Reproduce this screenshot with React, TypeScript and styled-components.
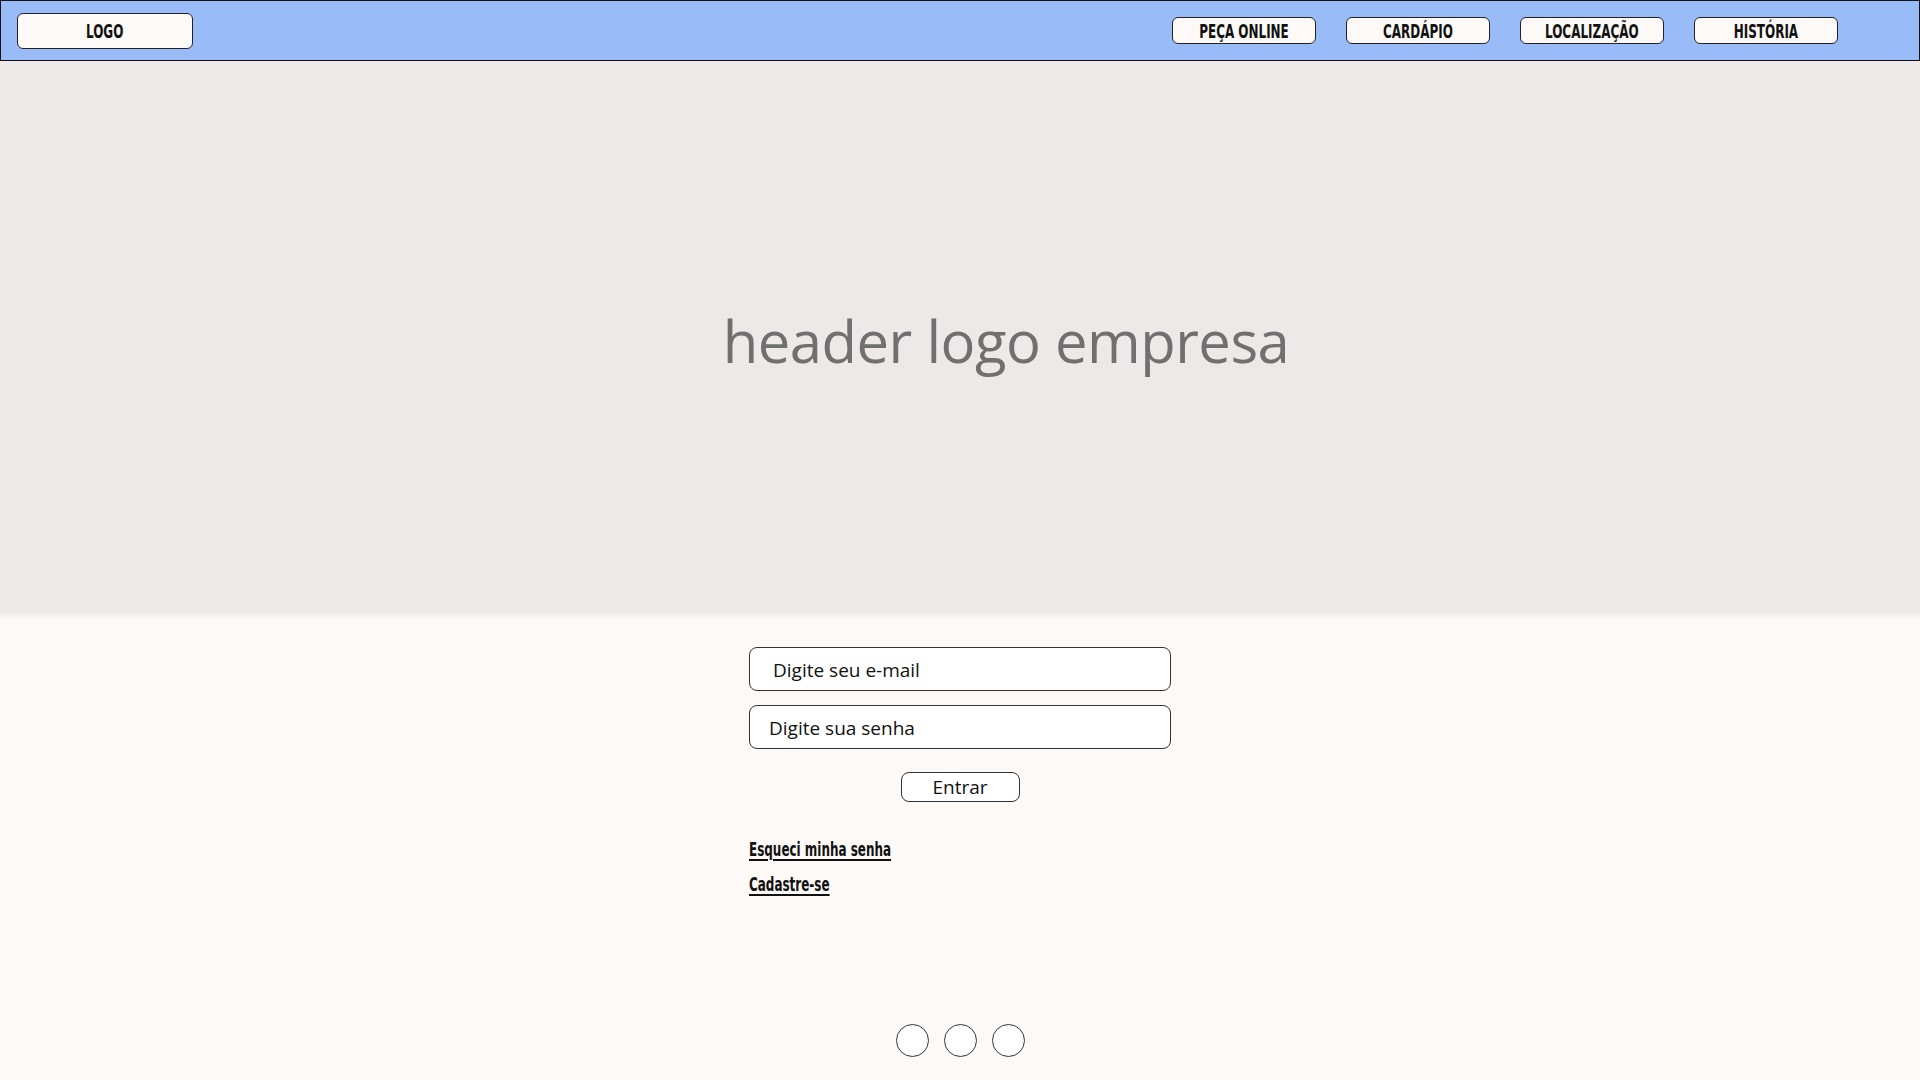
import React from "react";
import styled, { createGlobalStyle } from "styled-components";

const Global = createGlobalStyle`
  html, body { margin: 0; padding: 0; background: #fcf9f7; }
  * { box-sizing: border-box; }
`;

const Page = styled.div`
  min-height: 100vh;
  display: flex;
  flex-direction: column;
  background: #fcf9f7;
`;

const NavBar = styled.nav`
  height: 61px;
  background: #99bcf8;
  border: 1px solid #111;
  display: flex;
  align-items: center;
  padding: 0 81px 0 16px;
`;

const NavLinks = styled.div`
  margin-left: auto;
  display: flex;
  gap: 30px;
`;

const Condensed = styled.span<{ $size: number; $scale: number; $underline?: boolean }>`
  display: inline-block;
  font-family: "DejaVu Sans Condensed", "DejaVu Sans", sans-serif;
  font-weight: bold;
  font-size: ${(p) => p.$size}px;
  transform: scaleX(${(p) => p.$scale});
  transform-origin: left center;
  white-space: nowrap;
  color: #111;
  text-decoration: ${(p) => (p.$underline ? "underline" : "none")};
  text-decoration-thickness: 1.5px;
  text-underline-offset: 3px;
`;

const CenterText = styled(Condensed)`
  transform-origin: center center;
`;

const NavButton = styled.button<{ $w: number; $h: number; $r: number }>`
  width: ${(p) => p.$w}px;
  height: ${(p) => p.$h}px;
  border-radius: ${(p) => p.$r}px;
  background: #fcf9f7;
  border: 1px solid #222;
  display: flex;
  align-items: center;
  justify-content: center;
  padding: 0;
  cursor: pointer;
  overflow: visible;
`;

const Hero = styled.header`
  height: 552px;
  background: #ede9e8;
  box-shadow: 0 2px 5px rgba(0, 0, 0, 0.08);
  display: flex;
  justify-content: center;
  padding: 251px 0 0 92px;
  position: relative;
  z-index: 1;
`;

const HeroTitle = styled.h1`
  margin: 0;
  font-family: "Open Sans", "Noto Sans", sans-serif;
  font-weight: 400;
  font-size: 58px;
  line-height: 1;
  color: #707070;
  letter-spacing: -0.5px;
`;

const Form = styled.form`
  width: 422px;
  margin: 34px auto 0;
  display: flex;
  flex-direction: column;
`;

const Field = styled.div<{ $pad: number; $mt: number }>`
  height: 44px;
  margin-top: ${(p) => p.$mt}px;
  border: 1px solid #333;
  border-radius: 8px;
  background: #fff;
  display: flex;
  align-items: center;
  padding: 2px 0 0 ${(p) => p.$pad}px;
  font-family: "Open Sans", "Noto Sans", sans-serif;
  font-size: 19px;
  color: #111;
`;

const Submit = styled.button`
  align-self: center;
  width: 119px;
  height: 30px;
  margin-top: 23px;
  border: 1px solid #333;
  border-radius: 8px;
  background: #fff;
  font-family: "Open Sans", "Noto Sans", sans-serif;
  font-size: 19px;
  color: #111;
  padding: 0;
  line-height: 1;
`;

const Links = styled.div`
  margin-top: 35px;
  display: flex;
  flex-direction: column;
  gap: 11px;
`;

const LinkText = styled.a`
  display: inline-block;
  align-self: flex-start;
  line-height: 24px;
  height: 24px;
  color: #111;
`;

const Dots = styled.div`
  margin-top: auto;
  padding-bottom: 23px;
  display: flex;
  justify-content: center;
  gap: 15px;
  padding-left: 1px;
`;

const Dot = styled.span`
  width: 33px;
  height: 33px;
  border-radius: 50%;
  border: 1px solid #333;
  background: #fff;
`;

const navItems = ["PEÇA ONLINE", "CARDÁPIO", "LOCALIZAÇÃO", "HISTÓRIA"];

export default function App() {
  return (
    <Page>
      <Global />
      <NavBar>
        <NavButton $w={176} $h={36} $r={6}>
          <CenterText $size={19} $scale={0.7}>LOGO</CenterText>
        </NavButton>
        <NavLinks>
          {navItems.map((t) => (
            <NavButton key={t} $w={144} $h={27} $r={6}>
              <CenterText $size={19} $scale={0.7}>{t}</CenterText>
            </NavButton>
          ))}
        </NavLinks>
      </NavBar>
      <Hero>
        <HeroTitle>header logo empresa</HeroTitle>
      </Hero>
      <Form onSubmit={(e) => e.preventDefault()}>
        <Field $pad={23} $mt={0}>Digite seu e-mail</Field>
        <Field $pad={19} $mt={14}>Digite sua senha</Field>
        <Submit type="submit">Entrar</Submit>
        <Links>
          <LinkText href="#">
            <Condensed $size={19} $scale={0.7} $underline>Esqueci minha senha</Condensed>
          </LinkText>
          <LinkText href="#">
            <Condensed $size={19} $scale={0.7} $underline>Cadastre-se</Condensed>
          </LinkText>
        </Links>
      </Form>
      <Dots>
        <Dot />
        <Dot />
        <Dot />
      </Dots>
    </Page>
  );
}
